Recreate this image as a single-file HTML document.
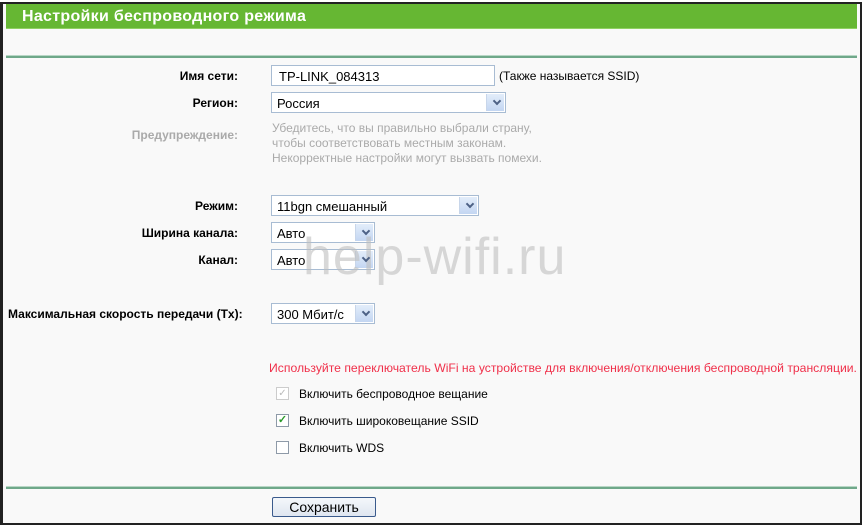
<!DOCTYPE html><html><head><meta charset="utf-8"><style>
*{margin:0;padding:0;box-sizing:border-box}
body{width:863px;height:525px;background:#fff;position:relative;overflow:hidden;font-family:"Liberation Sans",Arial,sans-serif;font-size:12px;color:#000}
#f{position:absolute;left:0;top:2px;width:862px;height:523px;border:2px solid #222;border-left-width:3px;background:#f9f9f9}
.a{position:absolute;white-space:nowrap}
.hdr{left:6px;top:4px;width:851px;height:25px;background:#66b733;border-bottom:1px solid #8fd062;color:#fff;font-weight:bold;font-size:16px;padding:4px 0 0 16px;letter-spacing:.3px}
.ln{left:6px;width:851px;height:3px;background:#6fa88a;border-top:1px solid #b9d7c6}
.lb{font-weight:bold;text-align:right;right:625px}
.in{background:#fff;border:1px solid #a8bcd3;height:21px;padding:3px 0 0 7px;font-size:13px}
.sel{background:#fff;border:1px solid #a8bcd3;height:21px;padding:3px 0 0 5px;font-size:13px}
.sel:after{content:"";position:absolute;right:1px;top:1px;width:17px;height:17px;background:linear-gradient(#e3edfa,#c3d6f2);border-left:1px solid #c8d6ea}
.sel i{position:absolute;right:5px;top:5px;width:6px;height:6px;border-right:2px solid #4d6185;border-bottom:2px solid #4d6185;transform:rotate(45deg);z-index:2}
.g{color:#aaa}
.cb{width:13px;height:13px;border:1px solid #8e9aa8;background:#fff}
.btn{left:272px;top:497px;width:104px;height:20px;border:1px solid #3a5a8c;border-radius:2px;background:linear-gradient(#f4f7fb,#dfe6f0);font-size:14px;text-align:center;padding-top:1px}
</style></head><body><div id="f"></div>
<div class="a hdr">Настройки беспроводного режима</div>
<div class="a ln" style="top:55px"></div>
<div class="a ln" style="top:486px"></div>
<div class="a lb" style="top:69px;right:625px;left:auto">Имя сети:</div>
<div class="a in" style="left:271px;top:65px;width:224px">TP-LINK_084313</div>
<div class="a" style="left:499px;top:69px">(Также называется SSID)</div>
<div class="a lb" style="top:96px">Регион:</div>
<div class="a sel" style="left:271px;top:92px;width:235px">Россия<i></i></div>
<div class="a lb g" style="top:128px">Предупреждение:</div>
<div class="a g" style="left:272px;top:121px;line-height:15px">Убедитесь, что вы правильно выбрали страну,<br>чтобы соответствовать местным законам.<br>Некорректные настройки могут вызвать помехи.</div>
<div class="a lb" style="top:199px">Режим:</div>
<div class="a sel" style="left:271px;top:195px;width:208px">11bgn смешанный<i></i></div>
<div class="a lb" style="top:226px">Ширина канала:</div>
<div class="a sel" style="left:271px;top:222px;width:104px">Авто<i></i></div>
<div class="a lb" style="top:253px">Канал:</div>
<div class="a sel" style="left:271px;top:249px;width:104px">Авто<i></i></div>
<div class="a" style="left:303px;top:227px;font-size:52px;color:rgba(190,190,190,.6);letter-spacing:1px">help-wifi.ru</div>
<div class="a lb" style="top:307px;left:8px;right:auto">Максимальная скорость передачи (Tx):</div>
<div class="a sel" style="left:271px;top:303px;width:104px">300 Мбит/с<i></i></div>
<div class="a" style="left:269px;top:361px;color:#f0304a;transform:scaleX(1.015);transform-origin:left">Используйте переключатель WiFi на устройстве для включения/отключения беспроводной трансляции.</div>
<div class="a cb" style="left:276px;top:387px;border-color:#ccc;color:#bbb;font-size:10px;line-height:11px;text-align:center">✓</div>
<div class="a" style="left:299px;top:387px">Включить беспроводное вещание</div>
<div class="a cb" style="left:276px;top:414px;color:#2a9a2a;font-size:11px;line-height:11px;text-align:center;font-weight:bold">✓</div>
<div class="a" style="left:299px;top:414px">Включить широковещание SSID</div>
<div class="a cb" style="left:276px;top:441px"></div>
<div class="a" style="left:299px;top:441px">Включить WDS</div>
<div class="a btn">Сохранить</div>
</body></html>
